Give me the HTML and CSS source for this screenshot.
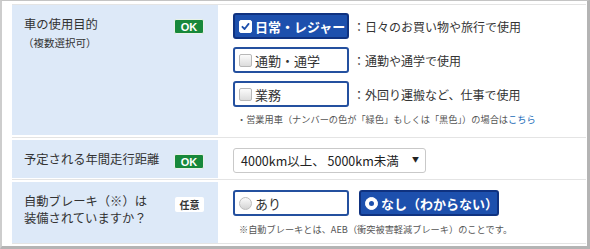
FILE: index.html
```html
<!DOCTYPE html>
<html lang="ja">
<head>
<meta charset="utf-8">
<link rel="stylesheet" href="styles.css">
</head>
<body>
<div class="frame">
  <div class="table">
    <div class="row r1">
      <div class="label">
        <div class="ltext">
          <div class="lt">車の使用目的</div>
          <div class="sub">（複数選択可）</div>
        </div>
        <span class="badge ok">OK</span>
      </div>
      <div class="value">
        <div class="opts">
          <div class="opt">
            <span class="btn checked"><span class="cb on"><svg viewBox="0 0 13 13" width="13" height="13"><path d="M3.4 6.8 L5.6 9 L9.6 3.9" fill="none" stroke="#1c4fac" stroke-width="1.8" stroke-linecap="round" stroke-linejoin="round"/></svg></span>日常・レジャー</span>
            <span class="desc">：日々のお買い物や旅行で使用</span>
          </div>
          <div class="opt">
            <span class="btn"><span class="cb"></span>通勤・通学</span>
            <span class="desc">：通勤や通学で使用</span>
          </div>
          <div class="opt">
            <span class="btn"><span class="cb"></span>業務</span>
            <span class="desc">：外回り運搬など、仕事で使用</span>
          </div>
        </div>
        <div class="note n1">・営業用車（ナンバーの色が「緑色」もしくは「黒色」）の場合は<a class="link">こちら</a></div>
      </div>
    </div>
    <div class="row r2">
      <div class="label">
        <div class="ltext"><div class="lt">予定される年間走行距離</div></div>
        <span class="badge ok">OK</span>
      </div>
      <div class="value">
        <div class="select"><span class="stext">4000km以上、 5000km未満</span><span class="arrow">▼</span></div>
      </div>
    </div>
    <div class="row r3">
      <div class="label">
        <div class="ltext"><div class="lt">自動ブレーキ（※）は<br>装備されていますか？</div></div>
        <span class="badge any">任意</span>
      </div>
      <div class="value">
        <div class="radios">
          <span class="btn"><span class="rd"></span>あり</span>
          <span class="btn checked wide"><span class="rd on"><span class="dot"></span></span>なし（わからない）</span>
        </div>
        <div class="note n3">※自動ブレーキとは、AEB（衝突被害軽減ブレーキ）のことです。</div>
      </div>
    </div>
  </div>
</div>
</body>
</html>
```
FILE: styles.css
```css
html, body {
  margin: 0;
  padding: 0;
  background: #fff;
}
body {
  font-family: "Noto Sans CJK JP", "Noto Sans", sans-serif;
  color: #333;
}
.frame {
  width: 590px;
  height: 249px;
  box-sizing: border-box;
  border-top: 1px solid #c4c4c4;
  border-left: 2px solid #cdcdcd;
  border-right: 3px solid #b4b4b4;
  border-bottom: 3px solid #b4b4b4;
  padding: 3px 1px 0 10px;
  background: #fff;
}
.table {
  border-top: 1px solid #e4e4e4;
  border-bottom: 1px solid #e4e4e4;
}
.row {
  display: flex;
}
.r2 {
  margin-top: 2px;
  border-top: 1px solid #e4e4e4;
  padding-top: 2px;
}
.r3 {
  margin-top: 1px;
  border-top: 1px solid #e4e4e4;
  padding-top: 2px;
}
.label {
  width: 206px;
  box-sizing: border-box;
  background: #dde9f8;
  padding: 11px 14px 0 12px;
  display: flex;
  justify-content: space-between;
  align-items: flex-start;
}
.lt {
  font-size: 12.3px;
  line-height: 17px;
  color: #333;
}
.sub {
  font-size: 10.5px;
  line-height: 14px;
  margin-top: 3px;
  margin-left: -1px;
  color: #333;
}
.badge {
  margin-top: 3px;
  height: 15px;
  box-sizing: border-box;
  border-radius: 2px;
  display: flex;
  align-items: center;
  justify-content: center;
}
.ok {
  width: 30px;
  background: #17883b;
  border: 1px solid #e8f2e6;
  color: #fff;
  font-family: "Liberation Sans", Arial, sans-serif;
  font-weight: bold;
  font-size: 11px;
}
.any {
  width: 29px;
  margin-top: 4px;
  background: #fff;
  color: #333;
  font-weight: bold;
  font-size: 10px;
}
.value {
  flex: 1;
  padding: 8px 0 0 15px;
  background: #fff;
}
.r1 .value { padding-bottom: 10px; }
.r2 .value { padding-bottom: 5px; }
.r3 .value { padding-bottom: 8px; }
.opts {
  display: flex;
  flex-direction: column;
  gap: 8px;
}
.opt {
  display: flex;
  align-items: center;
}
.btn {
  width: 116px;
  height: 26px;
  box-sizing: border-box;
  border: 2px solid #24509f;
  border-radius: 3px;
  background: #fff;
  display: flex;
  align-items: center;
  padding-left: 4px;
  font-size: 13px;
  color: #333;
  white-space: nowrap;
}
.btn.checked {
  background: #1d50ad;
  border-color: #0f3280;
  color: #fff;
  font-weight: bold;
}
.btn.wide {
  width: 140px;
}
.cb {
  width: 13px;
  height: 13px;
  box-sizing: border-box;
  border: 1px solid #b8b8b8;
  border-radius: 2px;
  background: linear-gradient(#fbfbfb, #dcdcdc);
  margin-right: 3px;
  flex: none;
  display: flex;
}
.cb.on {
  background: #fff;
  border-color: #fff;
}
.cb svg {
  margin: -1px;
}
.desc {
  margin-left: 4px;
  font-size: 12px;
  color: #333;
}
.note {
  font-size: 9.2px;
  line-height: 12px;
  color: #555;
}
.n1 {
  margin-top: 6px;
  margin-left: 4px;
}
.n3 {
  margin-top: 7px;
  margin-left: 6px;
}
.link {
  color: #1a6cb8;
}
.select {
  width: 193px;
  height: 25px;
  box-sizing: border-box;
  border: 1px solid #c9c9c9;
  border-radius: 3px;
  background: #fff;
  display: flex;
  align-items: center;
  justify-content: space-between;
  padding: 0 6px 0 7px;
}
.stext {
  font-size: 12.5px;
  color: #222;
}
.arrow {
  font-size: 7px;
  color: #222;
  margin-top: -3px;
}
.radios {
  display: flex;
  gap: 10px;
}
.rd {
  width: 13px;
  height: 13px;
  box-sizing: border-box;
  border: 1px solid #bdbdbd;
  border-radius: 50%;
  background: linear-gradient(#fafafa, #d4d4d4);
  margin-right: 3px;
  flex: none;
  display: flex;
  align-items: center;
  justify-content: center;
}
.rd.on {
  background: #fff;
  border-color: #fff;
}
.dot {
  width: 5px;
  height: 5px;
  border-radius: 50%;
  background: #1d50ad;
}
```
